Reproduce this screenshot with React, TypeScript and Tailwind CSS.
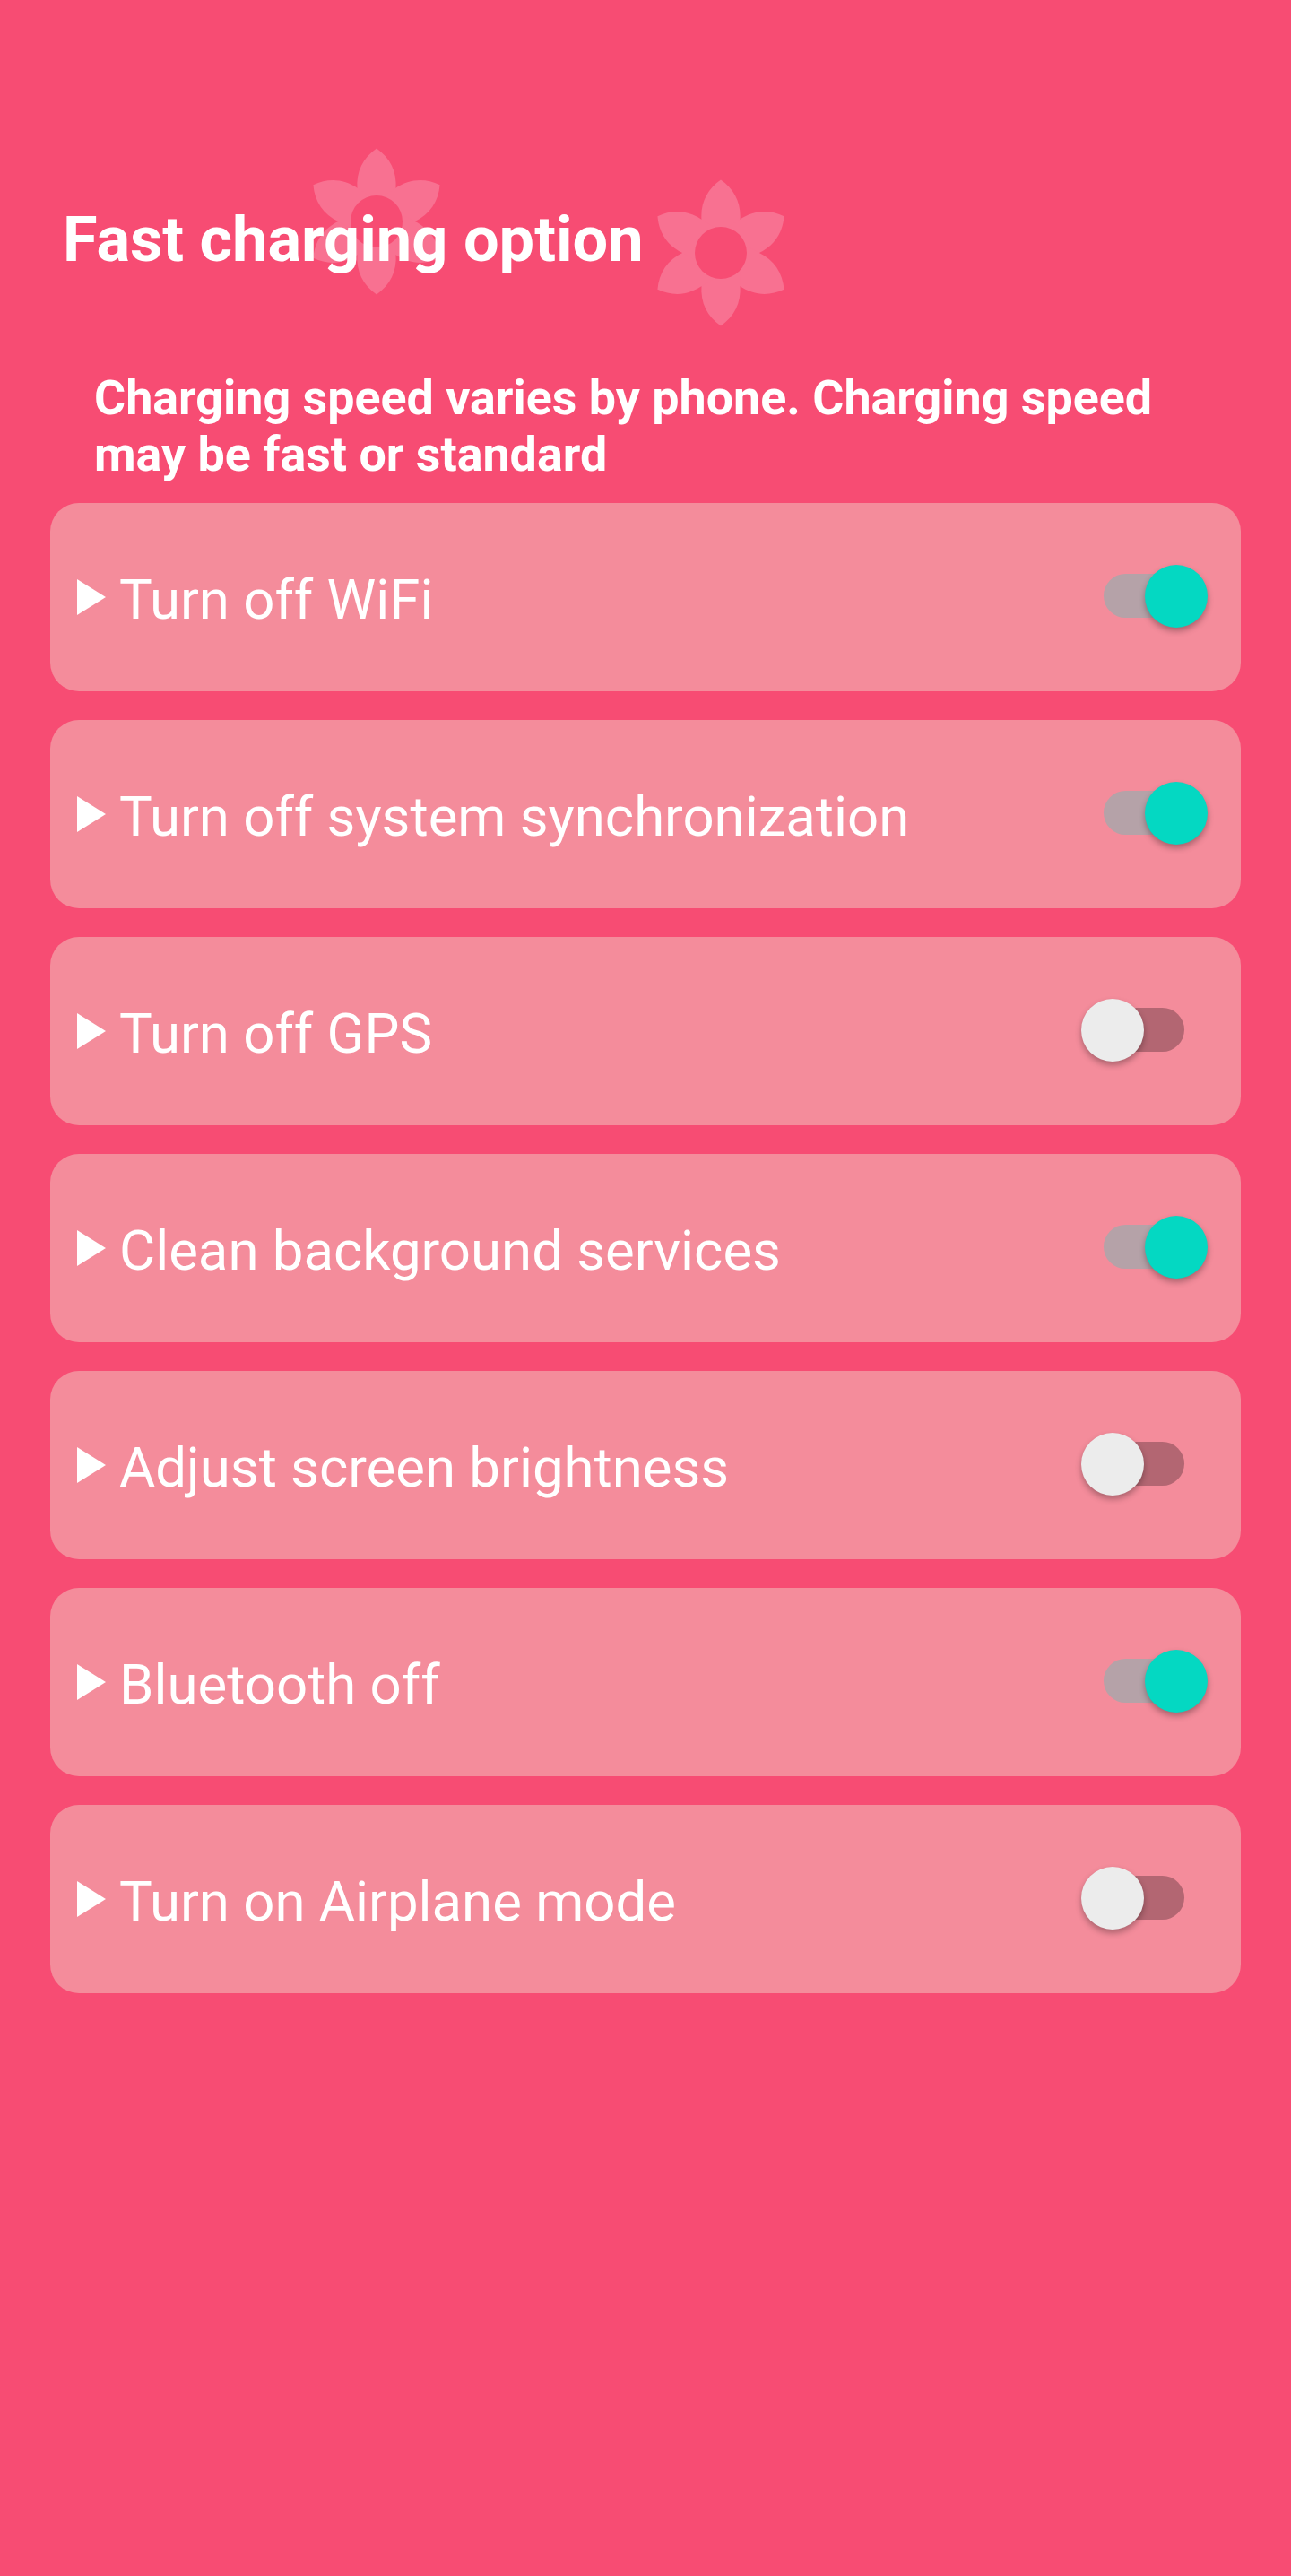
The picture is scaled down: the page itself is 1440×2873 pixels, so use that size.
import { FC } from 'react';
import { clsx } from 'clsx';

const options = [
	{ label: 'Turn off WiFi', on: true },
	{ label: 'Turn off system synchronization', on: true },
	{ label: 'Turn off GPS', on: false },
	{ label: 'Clean background services', on: true },
	{ label: 'Adjust screen brightness', on: false },
	{ label: 'Bluetooth off', on: true },
	{ label: 'Turn on Airplane mode', on: false },
];

// decoration behind the heading
const Flower: FC<{ className: string }> = ({ className }) => (
	<svg viewBox="-71 -82 142 164" className={clsx('absolute h-[164px] w-[142px]', className)} aria-hidden="true">
		<g fill="#f87191">
			<circle r="43" />
			{[0, 60, 120, 180, 240, 300].map((angle) => (
				<path key={angle} transform={`rotate(${angle})`} d="M0 -81.5C15 -71 23 -56 21.5 -36L21 -20L-21 -20L-21.5 -36C-23 -56 -15 -71 0 -81.5Z" />
			))}
		</g>
		<circle r="29" fill="#f74c73" />
	</svg>
);

const Toggle: FC<{ on: boolean }> = ({ on }) => (
	<div className={clsx('mb-[3px] flex h-[49px] w-[90px] items-center rounded-full', on ? 'justify-end bg-[#b5a2a8]' : 'justify-start bg-[#b36672]')}>
		<div
			className={clsx(
				'mt-[1px] size-[70px] flex-none rounded-full shadow-[0_4px_7px_rgba(0,0,0,0.3)]',
				on ? 'mr-[-26px] bg-[#04d8c2]' : 'ml-[-25px] bg-[#ececec]',
			)}
		/>
	</div>
);

export default function App() {
	return (
		<div className="relative min-h-[2873px] bg-[#f74c73] px-[56px] pt-[227px] font-['Roboto',sans-serif] text-white">
			<Flower className="left-[349px] top-[165px]" />
			<Flower className="left-[733px] top-[200px]" />
			<h1 className="relative ml-[14px] text-[70.3px] font-bold leading-[80px]">Fast charging option</h1>
			<p className="relative ml-[49px] mt-[105px] w-[1240px] text-[53.8px] font-bold leading-[63px]">
				Charging speed varies by phone. Charging speed may be fast or standard
			</p>
			<div className="mt-[23px] flex flex-col gap-[32px]">
				{options.map((option) => (
					<div key={option.label} className="flex h-[210px] items-center rounded-[32px] bg-[#f48c9b] pl-[30px] pr-[63px]">
						<svg viewBox="0 0 32 40" className="h-[40px] w-[32px] flex-none fill-white" aria-hidden="true">
							<path d="M0 0L32 20L0 40Z" />
						</svg>
						<span className="ml-[15px] flex-1 pt-[6px] text-[61.7px] leading-[72px]">{option.label}</span>
						<Toggle on={option.on} />
					</div>
				))}
			</div>
		</div>
	);
}
